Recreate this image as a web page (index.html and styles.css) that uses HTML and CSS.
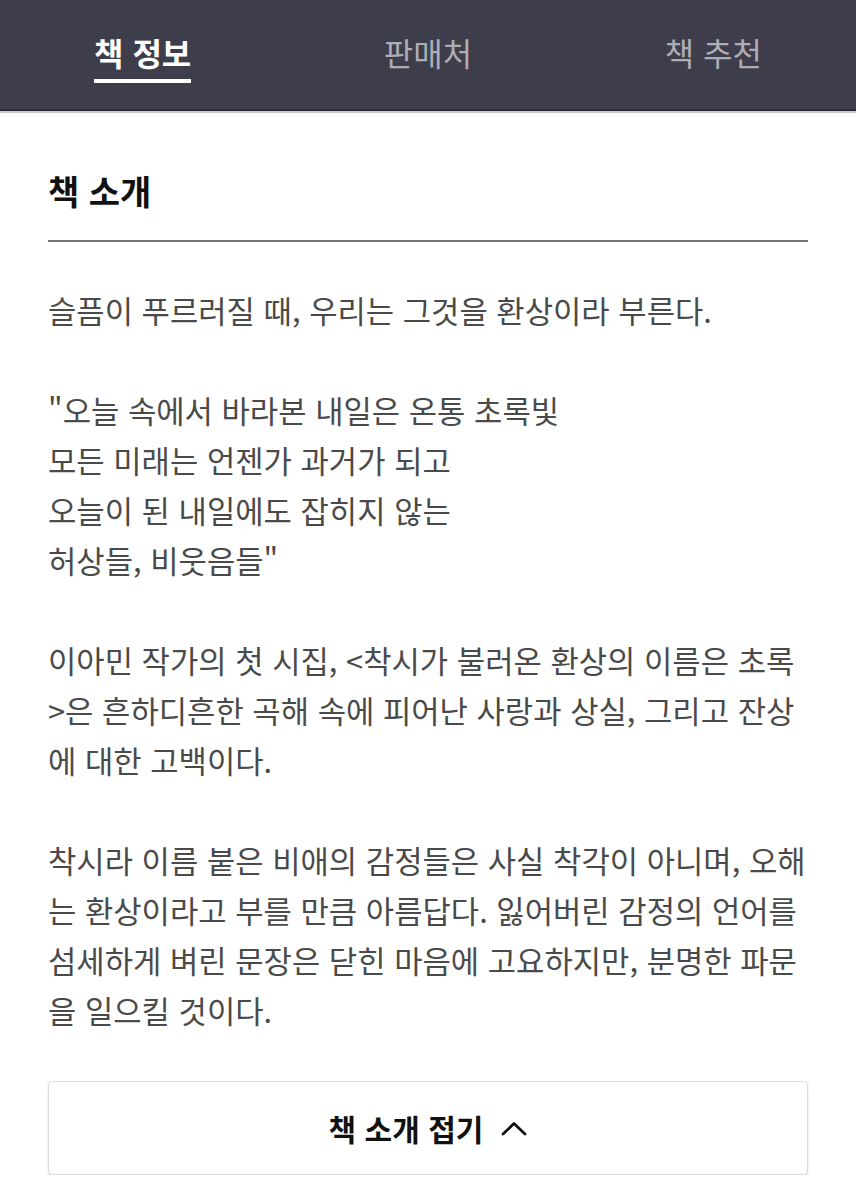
FILE: index.html
```html
<!DOCTYPE html>
<html lang="ko">
<head>
<meta charset="utf-8">
<link rel="stylesheet" href="styles.css">
</head>
<body>
<header class="tabs">
  <div class="tab active"><span class="tab-label">책 정보</span></div>
  <div class="tab"><span class="tab-label">판매처</span></div>
  <div class="tab"><span class="tab-label">책 추천</span></div>
</header>
<main class="content">
  <h2 class="title">책 소개</h2>
  <div class="divider"></div>
  <div class="intro">
    <p>슬픔이 푸르러질 때, 우리는 그것을 환상이라 부른다.</p>
    <p>"오늘 속에서 바라본 내일은 온통 초록빛<br>모든 미래는 언젠가 과거가 되고<br>오늘이 된 내일에도 잡히지 않는<br>허상들, 비웃음들"</p>
    <p>이아민 작가의 첫 시집, &lt;착시가 불러온 환상의 이름은 초록<br>&gt;은 흔하디흔한 곡해 속에 피어난 사랑과 상실, 그리고 잔상<br>에 대한 고백이다.</p>
    <p>착시라 이름 붙은 비애의 감정들은 사실 착각이 아니며, 오해<br>는 환상이라고 부를 만큼 아름답다. 잃어버린 감정의 언어를<br>섬세하게 벼린 문장은 닫힌 마음에 고요하지만, 분명한 파문<br>을 일으킬 것이다.</p>
  </div>
  <button class="fold">책 소개 접기<svg class="caret" width="26" height="15" viewBox="0 0 26 15"><path d="M2 13 L13 2.5 L24 13" fill="none" stroke="#111" stroke-width="2.8" stroke-linecap="round" stroke-linejoin="round"/></svg></button>
</main>
</body>
</html>
```
FILE: styles.css
```css
html, body {
  margin: 0;
  padding: 0;
  background: #ffffff;
}
body {
  font-family: "Noto Sans CJK KR", "Noto Sans", sans-serif;
  width: 856px;
}
.tabs {
  display: flex;
  height: 109px;
  background: #3e3d4c;
  border-bottom: 2px solid #2c2b37;
  box-shadow: 0 2px 0 #c9c8d0;
}
.tab {
  flex: 1;
  display: flex;
  justify-content: center;
  align-items: flex-start;
  padding-top: 29px;
}
.tab-label {
  font-size: 32px;
  line-height: 46px;
  color: #aeadb6;
  padding-bottom: 4px;
}
.tab.active .tab-label {
  color: #ffffff;
  font-weight: 700;
  border-bottom: 4px solid #ffffff;
}
.content {
  padding: 0 48px;
}
.title {
  margin: 0;
  padding-top: 58px;
  font-size: 34px;
  line-height: 44px;
  font-weight: 700;
  color: #111111;
}
.divider {
  margin-top: 27px;
  height: 2px;
  background: #777777;
}
.intro {
  margin-top: 43px;
  font-size: 30.8px;
  line-height: 50px;
  color: #4a4a4a;
  white-space: nowrap;
}
.intro p {
  margin: 0 0 50px 0;
}
.intro p:last-child {
  margin-bottom: 0;
}
.fold {
  margin-top: 46px;
  width: 760px;
  height: 94px;
  display: flex;
  justify-content: center;
  align-items: center;
  background: #ffffff;
  border: 1px solid #dcdcdc;
  border-radius: 4px;
  box-shadow: 0 2px 3px rgba(0,0,0,0.12);
  font-family: "Noto Sans CJK KR", "Noto Sans", sans-serif;
  font-size: 30px;
  font-weight: 700;
  color: #111111;
  padding: 0;
}
.caret {
  margin-left: 18px;
}
```
